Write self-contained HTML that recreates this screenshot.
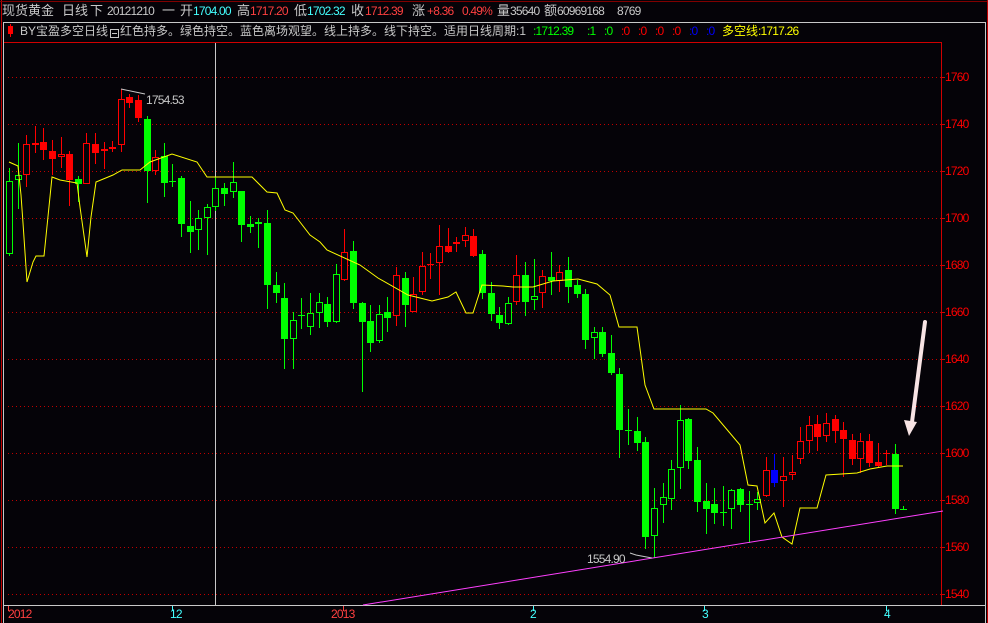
<!DOCTYPE html>
<html><head><meta charset="utf-8">
<style>
html,body{margin:0;padding:0;background:#050308;}
body{width:988px;height:623px;overflow:hidden;position:relative;font-family:"Liberation Sans","Noto Sans CJK SC",sans-serif;}
.t{position:absolute;font-size:13px;line-height:15px;white-space:nowrap;color:#c8c8c8;}
.s{font-size:12px;}
.n{font-size:12px;letter-spacing:-0.8px;}
.c{color:#4ff;} .r{color:#ff4040;} .w{color:#c8c8c8;} .gr{color:#0f0;} .rd{color:#f00;} .bl{color:#0000ff;} .ye{color:#ff0;}
svg{position:absolute;left:0;top:0;}
line.G{stroke:#00ff00} line.R{stroke:#ff0000} line.B{stroke:#0000ff}
rect.G{fill:#00ff00} rect.R{fill:#ff0000} rect.B{fill:#0000ff}
rect.g{fill:#050308;stroke:#00ff00} rect.r{fill:#050308;stroke:#ff0000}
</style></head><body>
<svg width="988" height="623" shape-rendering="crispEdges">
<line x1="1.5" y1="0" x2="1.5" y2="623" stroke="#c00000"/>
<line x1="0" y1="1.5" x2="988" y2="1.5" stroke="#800000"/>
<line x1="987.5" y1="0" x2="987.5" y2="623" stroke="#c00000"/>
<line x1="3" y1="22.5" x2="985" y2="22.5" stroke="#c8c8c8"/>
<line x1="3.5" y1="22" x2="3.5" y2="623" stroke="#c8c8c8"/>
<line x1="985.5" y1="22" x2="985.5" y2="623" stroke="#c8c8c8"/>
<line x1="4" y1="42.5" x2="941" y2="42.5" stroke="#d00000"/>
<line x1="941.5" y1="42" x2="941.5" y2="605" stroke="#d00000"/>
<line x1="4" y1="605.5" x2="985" y2="605.5" stroke="#c8c8c8"/>
<g stroke="#c00000" stroke-dasharray="1,3">
<line x1="8" y1="77.5" x2="941" y2="77.5"/><line x1="8" y1="124.5" x2="941" y2="124.5"/><line x1="8" y1="171.5" x2="941" y2="171.5"/><line x1="8" y1="218.5" x2="941" y2="218.5"/><line x1="8" y1="265.5" x2="941" y2="265.5"/><line x1="8" y1="312.5" x2="941" y2="312.5"/><line x1="8" y1="359.5" x2="941" y2="359.5"/><line x1="8" y1="406.5" x2="941" y2="406.5"/><line x1="8" y1="453.5" x2="941" y2="453.5"/><line x1="8" y1="500.5" x2="941" y2="500.5"/><line x1="8" y1="547.5" x2="941" y2="547.5"/><line x1="8" y1="594.5" x2="941" y2="594.5"/>
</g>
<g stroke="#d00000">
<line x1="941" y1="77.5" x2="945" y2="77.5"/><line x1="941" y1="124.5" x2="945" y2="124.5"/><line x1="941" y1="171.5" x2="945" y2="171.5"/><line x1="941" y1="218.5" x2="945" y2="218.5"/><line x1="941" y1="265.5" x2="945" y2="265.5"/><line x1="941" y1="312.5" x2="945" y2="312.5"/><line x1="941" y1="359.5" x2="945" y2="359.5"/><line x1="941" y1="406.5" x2="945" y2="406.5"/><line x1="941" y1="453.5" x2="945" y2="453.5"/><line x1="941" y1="500.5" x2="945" y2="500.5"/><line x1="941" y1="547.5" x2="945" y2="547.5"/><line x1="941" y1="594.5" x2="945" y2="594.5"/>
</g>
<line x1="8.5" y1="606" x2="8.5" y2="611" stroke="#ff4040"/>
<line x1="172.5" y1="606" x2="172.5" y2="611" stroke="#4ff"/>
<line x1="343.5" y1="606" x2="343.5" y2="611" stroke="#ff4040"/>
<line x1="533.5" y1="606" x2="533.5" y2="611" stroke="#4ff"/>
<line x1="704.5" y1="606" x2="704.5" y2="611" stroke="#4ff"/>
<line x1="886.5" y1="606" x2="886.5" y2="611" stroke="#4ff"/>
<line x1="215.5" y1="43" x2="215.5" y2="605" stroke="#c8c8c8"/>
<line class="G" x1="9.5" y1="168" x2="9.5" y2="256"/><rect class="g" x="6.5" y="181.5" width="6" height="72"/>
<line class="G" x1="18.5" y1="143" x2="18.5" y2="209"/><rect class="g" x="15.5" y="175.5" width="6" height="4"/>
<line class="R" x1="26.5" y1="135" x2="26.5" y2="187"/><rect class="r" x="23.5" y="144.5" width="6" height="30"/>
<line class="R" x1="35.5" y1="126" x2="35.5" y2="153"/><rect class="R" x="32" y="143" width="7" height="2"/>
<line class="R" x1="43.5" y1="128" x2="43.5" y2="160"/><rect class="R" x="40" y="142" width="7" height="8"/>
<line class="R" x1="52.5" y1="140" x2="52.5" y2="175"/><rect class="R" x="49" y="151" width="7" height="8"/>
<line class="R" x1="61.5" y1="137" x2="61.5" y2="168"/><rect class="r" x="58.5" y="154.5" width="6" height="2"/>
<line class="R" x1="69.5" y1="151" x2="69.5" y2="206"/><rect class="R" x="66" y="154" width="7" height="26"/>
<line class="G" x1="78.5" y1="176" x2="78.5" y2="202"/><rect class="G" x="75" y="179" width="7" height="5"/>
<line class="R" x1="86.5" y1="133" x2="86.5" y2="184"/><rect class="r" x="83.5" y="143.5" width="6" height="40"/>
<line class="R" x1="95.5" y1="133" x2="95.5" y2="164"/><rect class="R" x="92" y="144" width="7" height="9"/>
<line class="R" x1="104.5" y1="142" x2="104.5" y2="169"/><rect class="r" x="101.5" y="149.5" width="6" height="1"/>
<line class="R" x1="112.5" y1="141" x2="112.5" y2="152"/><rect class="R" x="109" y="147" width="7" height="2"/>
<line class="R" x1="121.5" y1="89" x2="121.5" y2="152"/><rect class="r" x="118.5" y="99.5" width="6" height="45"/>
<line class="R" x1="129.5" y1="94" x2="129.5" y2="108"/><rect class="R" x="126" y="97" width="7" height="6"/>
<line class="R" x1="138.5" y1="95" x2="138.5" y2="122"/><rect class="R" x="135" y="100" width="7" height="18"/>
<line class="G" x1="147.5" y1="116" x2="147.5" y2="203"/><rect class="G" x="144" y="119" width="7" height="52"/>
<line class="R" x1="155.5" y1="150" x2="155.5" y2="175"/><rect class="r" x="152.5" y="157.5" width="6" height="13"/>
<line class="G" x1="164.5" y1="143" x2="164.5" y2="197"/><rect class="G" x="161" y="156" width="7" height="27"/>
<line class="G" x1="172.5" y1="164" x2="172.5" y2="187"/><rect class="G" x="169" y="181" width="7" height="1"/>
<line class="G" x1="181.5" y1="176" x2="181.5" y2="237"/><rect class="G" x="178" y="178" width="7" height="46"/>
<line class="G" x1="190.5" y1="201" x2="190.5" y2="253"/><rect class="G" x="187" y="226" width="7" height="6"/>
<line class="G" x1="198.5" y1="210" x2="198.5" y2="250"/><rect class="g" x="195.5" y="218.5" width="6" height="11"/>
<line class="G" x1="207.5" y1="204" x2="207.5" y2="255"/><rect class="g" x="204.5" y="207.5" width="6" height="10"/>
<line class="G" x1="215.5" y1="177" x2="215.5" y2="211"/><rect class="g" x="212.5" y="188.5" width="6" height="18"/>
<line class="G" x1="224.5" y1="183" x2="224.5" y2="206"/><rect class="G" x="221" y="188" width="7" height="6"/>
<line class="G" x1="233.5" y1="162" x2="233.5" y2="198"/><rect class="g" x="230.5" y="182.5" width="6" height="9"/>
<line class="G" x1="241.5" y1="191" x2="241.5" y2="242"/><rect class="G" x="238" y="191" width="7" height="34"/>
<line class="G" x1="250.5" y1="216" x2="250.5" y2="233"/><rect class="G" x="247" y="224" width="7" height="3"/>
<line class="G" x1="258.5" y1="218" x2="258.5" y2="248"/><rect class="G" x="255" y="222" width="7" height="2"/>
<line class="G" x1="267.5" y1="210" x2="267.5" y2="309"/><rect class="G" x="264" y="223" width="7" height="62"/>
<line class="G" x1="276.5" y1="272" x2="276.5" y2="303"/><rect class="G" x="273" y="285" width="7" height="8"/>
<line class="G" x1="284.5" y1="283" x2="284.5" y2="369"/><rect class="G" x="281" y="298" width="7" height="41"/>
<line class="G" x1="293.5" y1="312" x2="293.5" y2="369"/><rect class="g" x="290.5" y="320.5" width="6" height="18"/>
<line class="G" x1="301.5" y1="298" x2="301.5" y2="329"/><rect class="G" x="298" y="315" width="7" height="1"/>
<line class="G" x1="310.5" y1="293" x2="310.5" y2="335"/><rect class="g" x="307.5" y="313.5" width="6" height="13"/>
<line class="G" x1="319.5" y1="293" x2="319.5" y2="328"/><rect class="g" x="316.5" y="302.5" width="6" height="10"/>
<line class="G" x1="327.5" y1="297" x2="327.5" y2="327"/><rect class="G" x="324" y="304" width="7" height="18"/>
<line class="G" x1="336.5" y1="264" x2="336.5" y2="323"/><rect class="g" x="333.5" y="274.5" width="6" height="47"/>
<line class="R" x1="344.5" y1="229" x2="344.5" y2="281"/><rect class="r" x="341.5" y="252.5" width="6" height="27"/>
<line class="G" x1="353.5" y1="241" x2="353.5" y2="309"/><rect class="G" x="350" y="251" width="7" height="52"/>
<line class="G" x1="362.5" y1="302" x2="362.5" y2="392"/><rect class="G" x="359" y="303" width="7" height="19"/>
<line class="G" x1="370.5" y1="305" x2="370.5" y2="352"/><rect class="G" x="367" y="321" width="7" height="22"/>
<line class="G" x1="379.5" y1="305" x2="379.5" y2="343"/><rect class="g" x="376.5" y="314.5" width="6" height="26"/>
<line class="G" x1="387.5" y1="297" x2="387.5" y2="332"/><rect class="G" x="384" y="312" width="7" height="6"/>
<line class="R" x1="396.5" y1="267" x2="396.5" y2="326"/><rect class="r" x="393.5" y="275.5" width="6" height="40"/>
<line class="G" x1="405.5" y1="272" x2="405.5" y2="327"/><rect class="G" x="402" y="278" width="7" height="27"/>
<line class="R" x1="413.5" y1="277" x2="413.5" y2="312"/><rect class="r" x="410.5" y="294.5" width="6" height="17"/>
<line class="R" x1="422.5" y1="252" x2="422.5" y2="295"/><rect class="r" x="419.5" y="266.5" width="6" height="25"/>
<line class="R" x1="430.5" y1="253" x2="430.5" y2="279"/><rect class="R" x="427" y="264" width="7" height="1"/>
<line class="R" x1="439.5" y1="225" x2="439.5" y2="295"/><rect class="r" x="436.5" y="246.5" width="6" height="16"/>
<line class="R" x1="448.5" y1="228" x2="448.5" y2="253"/><rect class="R" x="445" y="246" width="7" height="6"/>
<line class="R" x1="456.5" y1="237" x2="456.5" y2="252"/><rect class="r" x="453.5" y="242.5" width="6" height="1"/>
<line class="R" x1="465.5" y1="227" x2="465.5" y2="247"/><rect class="r" x="462.5" y="235.5" width="6" height="5"/>
<line class="R" x1="473.5" y1="229" x2="473.5" y2="257"/><rect class="R" x="470" y="236" width="7" height="20"/>
<line class="G" x1="482.5" y1="250" x2="482.5" y2="299"/><rect class="G" x="479" y="254" width="7" height="39"/>
<line class="G" x1="491.5" y1="282" x2="491.5" y2="321"/><rect class="G" x="488" y="293" width="7" height="21"/>
<line class="G" x1="499.5" y1="307" x2="499.5" y2="329"/><rect class="G" x="496" y="315" width="7" height="8"/>
<line class="G" x1="508.5" y1="297" x2="508.5" y2="325"/><rect class="g" x="505.5" y="303.5" width="6" height="20"/>
<line class="R" x1="516.5" y1="255" x2="516.5" y2="305"/><rect class="r" x="513.5" y="275.5" width="6" height="26"/>
<line class="G" x1="525.5" y1="262" x2="525.5" y2="316"/><rect class="G" x="522" y="275" width="7" height="27"/>
<line class="G" x1="534.5" y1="259" x2="534.5" y2="310"/><rect class="g" x="531.5" y="296.5" width="6" height="3"/>
<line class="R" x1="542.5" y1="270" x2="542.5" y2="308"/><rect class="r" x="539.5" y="276.5" width="6" height="16"/>
<line class="G" x1="551.5" y1="252" x2="551.5" y2="295"/><rect class="G" x="548" y="277" width="7" height="4"/>
<line class="R" x1="559.5" y1="265" x2="559.5" y2="292"/><rect class="r" x="556.5" y="272.5" width="6" height="8"/>
<line class="G" x1="568.5" y1="257" x2="568.5" y2="303"/><rect class="G" x="565" y="270" width="7" height="17"/>
<line class="G" x1="577.5" y1="280" x2="577.5" y2="298"/><rect class="G" x="574" y="285" width="7" height="9"/>
<line class="G" x1="585.5" y1="289" x2="585.5" y2="349"/><rect class="G" x="582" y="294" width="7" height="46"/>
<line class="G" x1="594.5" y1="327" x2="594.5" y2="359"/><rect class="g" x="591.5" y="332.5" width="6" height="5"/>
<line class="G" x1="602.5" y1="327" x2="602.5" y2="357"/><rect class="G" x="599" y="332" width="7" height="22"/>
<line class="G" x1="611.5" y1="335" x2="611.5" y2="375"/><rect class="G" x="608" y="353" width="7" height="20"/>
<line class="G" x1="619.5" y1="368" x2="619.5" y2="458"/><rect class="G" x="616" y="374" width="7" height="56"/>
<line class="G" x1="628.5" y1="409" x2="628.5" y2="445"/><rect class="G" x="625" y="430" width="7" height="1"/>
<line class="G" x1="637.5" y1="417" x2="637.5" y2="451"/><rect class="G" x="634" y="431" width="7" height="12"/>
<line class="G" x1="645.5" y1="437" x2="645.5" y2="549"/><rect class="G" x="642" y="442" width="7" height="95"/>
<line class="G" x1="654.5" y1="488" x2="654.5" y2="558"/><rect class="g" x="651.5" y="508.5" width="6" height="27"/>
<line class="G" x1="663.5" y1="483" x2="663.5" y2="523"/><rect class="g" x="660.5" y="497.5" width="6" height="7"/>
<line class="G" x1="671.5" y1="460" x2="671.5" y2="510"/><rect class="g" x="668.5" y="469.5" width="6" height="29"/>
<line class="G" x1="680.5" y1="405" x2="680.5" y2="489"/><rect class="g" x="677.5" y="420.5" width="6" height="47"/>
<line class="G" x1="688.5" y1="418" x2="688.5" y2="469"/><rect class="G" x="685" y="419" width="7" height="42"/>
<line class="G" x1="697.5" y1="447" x2="697.5" y2="512"/><rect class="G" x="694" y="460" width="7" height="42"/>
<line class="G" x1="706.5" y1="483" x2="706.5" y2="534"/><rect class="G" x="703" y="501" width="7" height="8"/>
<line class="G" x1="714.5" y1="488" x2="714.5" y2="524"/><rect class="G" x="711" y="504" width="7" height="9"/>
<line class="G" x1="723.5" y1="486" x2="723.5" y2="526"/><rect class="G" x="720" y="512" width="7" height="1"/>
<line class="G" x1="731.5" y1="489" x2="731.5" y2="529"/><rect class="g" x="728.5" y="490.5" width="6" height="18"/>
<line class="G" x1="740.5" y1="488" x2="740.5" y2="512"/><rect class="G" x="737" y="489" width="7" height="16"/>
<line class="G" x1="749.5" y1="491" x2="749.5" y2="543"/><rect class="G" x="746" y="504" width="7" height="1"/>
<line class="G" x1="757.5" y1="492" x2="757.5" y2="510"/><rect class="g" x="754.5" y="499.5" width="6" height="3"/>
<line class="R" x1="766.5" y1="457" x2="766.5" y2="497"/><rect class="r" x="763.5" y="470.5" width="6" height="25"/>
<line class="B" x1="774.5" y1="454" x2="774.5" y2="487"/><rect class="B" x="771" y="470" width="7" height="13"/>
<line class="R" x1="783.5" y1="457" x2="783.5" y2="507"/><rect class="r" x="780.5" y="476.5" width="6" height="4"/>
<line class="R" x1="792.5" y1="455" x2="792.5" y2="480"/><rect class="r" x="789.5" y="472.5" width="6" height="2"/>
<line class="R" x1="800.5" y1="427" x2="800.5" y2="464"/><rect class="r" x="797.5" y="441.5" width="6" height="17"/>
<line class="R" x1="809.5" y1="416" x2="809.5" y2="453"/><rect class="r" x="806.5" y="425.5" width="6" height="15"/>
<line class="R" x1="817.5" y1="415" x2="817.5" y2="451"/><rect class="R" x="814" y="424" width="7" height="13"/>
<line class="R" x1="826.5" y1="413" x2="826.5" y2="442"/><rect class="r" x="823.5" y="423.5" width="6" height="12"/>
<line class="R" x1="835.5" y1="415" x2="835.5" y2="443"/><rect class="R" x="832" y="419" width="7" height="12"/>
<line class="R" x1="843.5" y1="422" x2="843.5" y2="477"/><rect class="R" x="840" y="430" width="7" height="9"/>
<line class="R" x1="852.5" y1="434" x2="852.5" y2="465"/><rect class="R" x="849" y="440" width="7" height="19"/>
<line class="R" x1="860.5" y1="433" x2="860.5" y2="473"/><rect class="r" x="857.5" y="441.5" width="6" height="17"/>
<line class="R" x1="869.5" y1="434" x2="869.5" y2="467"/><rect class="R" x="866" y="441" width="7" height="22"/>
<line class="R" x1="878.5" y1="443" x2="878.5" y2="467"/><rect class="R" x="875" y="462" width="7" height="4"/>
<line class="R" x1="886.5" y1="450" x2="886.5" y2="465"/><rect class="R" x="883" y="453" width="7" height="1"/>
<line class="G" x1="895.5" y1="444" x2="895.5" y2="514"/><rect class="G" x="892" y="454" width="7" height="55"/>
<line class="G" x1="903.5" y1="506" x2="903.5" y2="509"/><rect class="G" x="900" y="509" width="7" height="1"/>
<polyline fill="none" stroke="#ffff00" stroke-width="1" shape-rendering="auto" points="9,162 18,166 21,195 23,223 27,282 33,262 36,256 44,256 52,177 60,180 77,183 80,207 87,257 91,217 96,182 113,175 122,170 140,170 150,162 172,154 197,162 207,177 252,177 267,192 277,193 285,210 293,213 310,235 320,242 327,250 360,265 378,278 408,295 432,301 448,297 456,292 466,313 473,313 482,285 503,286 513,287 533,287 553,281 578,279 597,284 610,295 619,327 637,327 645,385 654,409 706,409 713,413 740,445 748,485 757,486 765,523 774,513 782,537 792,544 800,508 817,508 826,475 857,473 870,469 887,466 903,466"/>
<line x1="363" y1="605" x2="943" y2="511" stroke="#ff40ff" shape-rendering="auto"/>
<polyline points="121,89 145,94" fill="none" stroke="#c8c8c8" shape-rendering="auto"/>
<polyline points="630,553 636,555 652,558" fill="none" stroke="#c8c8c8" shape-rendering="auto"/>
<g shape-rendering="auto">
<line x1="925" y1="322" x2="912" y2="422" stroke="#f8e4e4" stroke-width="4" stroke-linecap="round"/>
<polygon points="904,420 917,422 909,436" fill="#f8e4e4"/>
</g>
<line x1="10.5" y1="24" x2="10.5" y2="37" stroke="#f00"/>
<rect x="8" y="26" width="5" height="8" fill="#f00"/>
<rect x="110.5" y="29.5" width="8" height="8" fill="none" stroke="#c8c8c8"/>
<line x1="112" y1="33.5" x2="117" y2="33.5" stroke="#c8c8c8"/>
</svg>

<div class="t" style="left:2px;top:3px;">现货黄金</div>
<div class="t" style="left:62px;top:3px;">日线</div>
<div class="t" style="left:90px;top:3px;">下</div>
<div class="t n" style="left:107px;top:4px;">20121210</div>
<div class="t" style="left:162px;top:3px;">一</div>
<div class="t" style="left:180px;top:3px;">开</div><div class="t n c" style="left:193px;top:4px;">1704.00</div>
<div class="t" style="left:237px;top:3px;">高</div><div class="t n r" style="left:250px;top:4px;">1717.20</div>
<div class="t" style="left:294px;top:3px;">低</div><div class="t n c" style="left:307px;top:4px;">1702.32</div>
<div class="t" style="left:351px;top:3px;">收</div><div class="t n r" style="left:365px;top:4px;">1712.39</div>
<div class="t" style="left:412px;top:3px;">涨</div>
<div class="t n r" style="left:427px;top:4px;">+8.36</div>
<div class="t n r" style="left:462px;top:4px;">0.49%</div>
<div class="t" style="left:497px;top:3px;">量</div><div class="t n" style="left:510px;top:4px;">35640</div>
<div class="t" style="left:544px;top:3px;">额</div><div class="t n" style="left:557px;top:4px;">60969168</div>
<div class="t n" style="left:617px;top:4px;">8769</div>

<div class="t s" style="left:20px;top:24px;">BY宝盈多空日线</div>
<div class="t s" style="left:120px;top:24px;">红色持多。绿色持空。蓝色离场观望。线上持多。线下持空。适用日线周期:1</div>
<div class="t n gr" style="left:533px;top:24px;">:1712.39</div>
<div class="t n gr" style="left:587px;top:24px;">:1</div>
<div class="t n gr" style="left:604px;top:24px;">:0</div>
<div class="t n rd" style="left:621px;top:24px;">:0</div>
<div class="t n rd" style="left:638px;top:24px;">:0</div>
<div class="t n rd" style="left:655px;top:24px;">:0</div>
<div class="t n rd" style="left:672px;top:24px;">:0</div>
<div class="t n bl" style="left:689px;top:24px;">:0</div>
<div class="t n bl" style="left:706px;top:24px;">:0</div>
<div class="t s ye" style="left:722px;top:24px;">多空线<span class="n">:1717.26</span></div>

<div class="t n rd" style="left:945px;top:70px;">1760</div>
<div class="t n rd" style="left:945px;top:117px;">1740</div>
<div class="t n rd" style="left:945px;top:164px;">1720</div>
<div class="t n rd" style="left:945px;top:211px;">1700</div>
<div class="t n rd" style="left:945px;top:258px;">1680</div>
<div class="t n rd" style="left:945px;top:305px;">1660</div>
<div class="t n rd" style="left:945px;top:352px;">1640</div>
<div class="t n rd" style="left:945px;top:399px;">1620</div>
<div class="t n rd" style="left:945px;top:446px;">1600</div>
<div class="t n rd" style="left:945px;top:493px;">1580</div>
<div class="t n rd" style="left:945px;top:540px;">1560</div>
<div class="t n rd" style="left:945px;top:587px;">1540</div>

<div class="t n" style="left:146px;top:93px;">1754.53</div>
<div class="t n" style="left:587px;top:552px;">1554.90</div>

<div class="t n r" style="left:8px;top:607px;">2012</div>
<div class="t n c" style="left:170px;top:607px;">12</div>
<div class="t n r" style="left:331px;top:607px;">2013</div>
<div class="t n c" style="left:530px;top:607px;">2</div>
<div class="t n c" style="left:702px;top:607px;">3</div>
<div class="t n c" style="left:884px;top:607px;">4</div>
</body></html>
